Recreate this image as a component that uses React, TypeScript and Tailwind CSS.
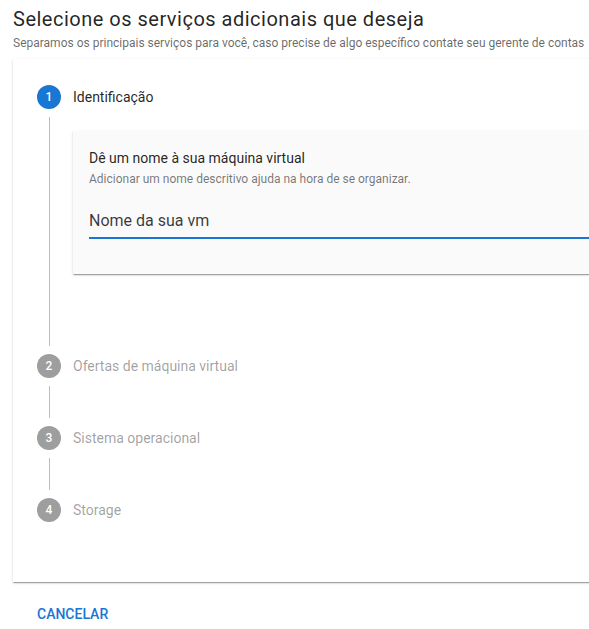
import React from "react";

const font = { fontFamily: "Roboto, 'Liberation Sans', sans-serif" };

function StepIcon({ n, active }: { n: number; active?: boolean }) {
  return (
    <div
      className={`flex h-6 w-6 shrink-0 items-center justify-center rounded-full text-[12px] leading-none font-medium text-white ${
        active ? "bg-[#1976d2]" : "bg-[#9e9e9e]"
      }`}
    >
      {n}
    </div>
  );
}

function StepLabel({ n, label, active }: { n: number; label: string; active?: boolean }) {
  return (
    <div className="flex items-center gap-3 py-2">
      <StepIcon n={n} active={active} />
      <span
        className={`text-[14px] leading-5 ${active ? "text-[rgba(0,0,0,0.87)]" : "text-[rgba(0,0,0,0.38)]"}`}
      >
        {label}
      </span>
    </div>
  );
}

function Connector() {
  return <div className="ml-3 h-8 border-l border-[#bdbdbd]" />;
}

export default function App() {
  return (
    <div className="min-h-[629px] w-[589px] overflow-hidden bg-white" style={font}>
      <div className="pl-[13px]">
        <h1 className="pt-[7px] text-[20px] leading-6 font-normal tracking-[0.5px] text-[rgba(0,0,0,0.87)]">
          Selecione os serviços adicionais que deseja
        </h1>
        <p className="mt-1 text-[12px] leading-4 text-[rgba(0,0,0,0.6)] whitespace-nowrap">
          Separamos os principais serviços para você, caso precise de algo específico contate seu gerente de contas
        </p>

        <div className="mt-2 w-[640px] bg-white pt-[18px] pb-[52px] pl-6 shadow-[0_2px_1px_-1px_rgba(0,0,0,0.2),0_1px_1px_0_rgba(0,0,0,0.14),0_1px_3px_0_rgba(0,0,0,0.12)]">
          <StepLabel n={1} label="Identificação" active />
          <div className="ml-3 border-l border-[#bdbdbd] pl-[23px] pt-[14px] pb-10">
            <div className="bg-[#fafafa] pt-[17px] pb-[35px] pl-4 shadow-[0_2px_1px_-1px_rgba(0,0,0,0.2),0_1px_1px_0_rgba(0,0,0,0.14),0_1px_3px_0_rgba(0,0,0,0.12)]">
              <div className="text-[14px] leading-5 text-[rgba(0,0,0,0.87)]">
                Dê um nome à sua máquina virtual
              </div>
              <div className="mt-[3px] text-[12px] leading-4 text-[rgba(0,0,0,0.54)]">
                Adicionar um nome descritivo ajuda na hora de se organizar.
              </div>
              <div className="mt-[22px] border-b-2 border-[#1976d2] pb-1">
                <div className="text-[16px] leading-6 text-[rgba(0,0,0,0.78)]">Nome da sua vm</div>
              </div>
            </div>
          </div>
          <Connector />
          <StepLabel n={2} label="Ofertas de máquina virtual" />
          <Connector />
          <StepLabel n={3} label="Sistema operacional" />
          <Connector />
          <StepLabel n={4} label="Storage" />
        </div>

        <div className="mt-5 pl-6">
          <span className="text-[14px] leading-6 font-medium uppercase text-[#1976d2]">
            Cancelar
          </span>
        </div>
      </div>
    </div>
  );
}
